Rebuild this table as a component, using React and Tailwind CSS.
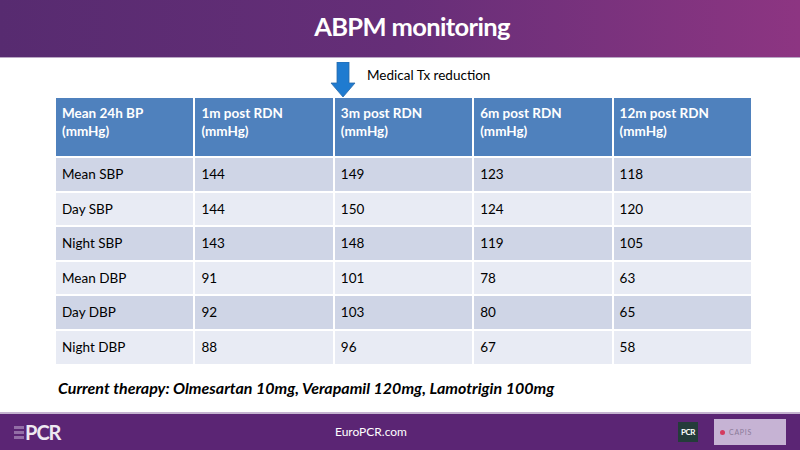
import React from "react";

const headers = [
  "Mean 24h BP (mmHg)",
  "1m post RDN (mmHg)",
  "3m post RDN (mmHg)",
  "6m post RDN (mmHg)",
  "12m post RDN (mmHg)",
];

const rows = [
  ["Mean SBP", "144", "149", "123", "118"],
  ["Day SBP", "144", "150", "124", "120"],
  ["Night SBP", "143", "148", "119", "105"],
  ["Mean DBP", "91", "101", "78", "63"],
  ["Day DBP", "92", "103", "80", "65"],
  ["Night DBP", "88", "96", "67", "58"],
];

function DownArrow() {
  return (
    <svg width="26" height="36" viewBox="0 0 26 36">
      <path d="M7 0 H19 V21 H25 L13 35 L1 21 H7 Z" fill="#1f7bd0" stroke="#2a6aa8" strokeWidth="0.8" />
    </svg>
  );
}

export default function App() {
  return (
    <div
      className="w-[800px] h-[450px] bg-white flex flex-col overflow-hidden"
      style={{ fontFamily: "Lato, 'Open Sans', sans-serif" }}
    >
      {/* title bar */}
      <div className="h-[58px] shrink-0 flex items-center justify-center pl-[24px] bg-gradient-to-r from-[#572b70] via-[#662e78] to-[#8d3582] border-b border-[#b9a7c4]">
        <h1 className="text-white text-[25.5px] font-bold tracking-tight pb-[4px]">ABPM monitoring</h1>
      </div>

      {/* arrow + note */}
      <div className="h-[40px] shrink-0 flex items-start pt-[4px] pl-[330px]">
        <DownArrow />
        <span className="ml-[11px] mt-[3px] text-[13.5px] text-black">Medical Tx reduction</span>
      </div>

      {/* table */}
      <div className="ml-[56px] w-[695px] grid grid-cols-5 gap-[2px] bg-white">
        {headers.map((h) => (
          <div key={h} className="h-[58px] bg-[#4f81bd] text-white font-bold text-[13.5px] leading-[18px] px-[6px] pt-[6px]">
            {h.replace(" (mmHg)", "")}
            <br />
            (mmHg)
          </div>
        ))}
        {rows.map((r, i) =>
          r.map((c, j) => (
            <div
              key={i + "-" + j}
              className={
                "h-[32.6px] text-[13.5px] text-black px-[6px] pt-[6px] " +
                (i % 2 === 0 ? "bg-[#cfd5e6]" : "bg-[#e8ebf4]")
              }
            >
              {c}
            </div>
          ))
        )}
      </div>

      {/* therapy line */}
      <div className="pl-[58px] pt-[12px] text-[16px] font-bold italic text-black">
        Current therapy: Olmesartan 10mg, Verapamil 120mg, Lamotrigin 100mg
      </div>

      <div className="flex-1" />

      {/* footer */}
      <div className="h-[38px] shrink-0 bg-[#5b2574] border-t-2 border-[#c5b3d0] flex items-center px-[14px]">
        <div className="w-[60px] flex items-center">
          <div className="flex flex-col gap-[2px] mr-[1px] opacity-60">
            <div className="w-[10px] h-[3px] bg-[#b9a0c8]" />
            <div className="w-[10px] h-[3px] bg-[#b9a0c8]" />
            <div className="w-[10px] h-[3px] bg-[#b9a0c8]" />
          </div>
          <span className="text-white font-bold text-[20px] tracking-tighter opacity-90">PCR</span>
        </div>
        <div className="flex-1 text-center text-white text-[12px] pr-[10px]">EuroPCR.com</div>
        <div className="flex items-center gap-[16px]">
          <div className="w-[20px] h-[20px] bg-[#243c3a] flex items-center justify-center text-[8px] font-bold text-white tracking-tighter">
            PCR
          </div>
          <div className="w-[72px] h-[26px] bg-[#c6b3d4] flex items-center px-[6px] gap-[4px]">
            <div className="w-[5px] h-[5px] rounded-full bg-[#d43a5e]" />
            <span className="text-[7px] text-[#8b7a99] tracking-widest">CAPIS</span>
          </div>
        </div>
      </div>
    </div>
  );
}
